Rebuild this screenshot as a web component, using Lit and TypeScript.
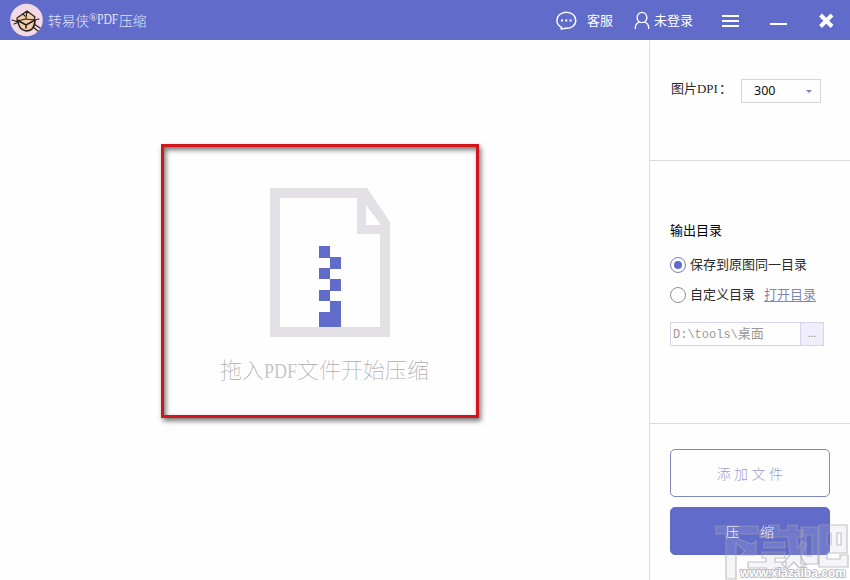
import { LitElement, html, css, svg } from "lit";
import { customElement, state } from "lit/decorators.js";

@customElement("app-root")
export class AppRoot extends LitElement {
  static styles = css`
    :host {
      display: flex;
      flex-direction: column;
      position: relative;
      width: 850px;
      height: 580px;
      overflow: hidden;
      background: #fefefe;
      font: 13px/20px "Liberation Sans", "Noto Sans CJK SC", sans-serif;
      color: #2b2b2b;
    }
    * { box-sizing: border-box; }
    svg { display: block; flex: none; }
    .bar {
      height: 40px;
      flex: none;
      display: flex;
      align-items: center;
      background: #616bca;
      color: #fff;
      padding-left: 10px;
    }
    .title {
      display: flex;
      margin-left: 5px;
      width: 508px;
      font: 300 13.7px/20px "Noto Sans CJK SC", sans-serif;
      color: #e3e5fb;
      white-space: nowrap;
    }
    .reg { width: 8px; font: 11px/14px "Liberation Serif", serif; }
    .half {
      display: inline-block;
      font-family: "Liberation Serif", serif;
      transform-origin: 0 50%;
      white-space: pre;
    }
    .half.t { width: 22px; transform: scaleX(0.85); }
    .half.b { width: 33px; transform: scaleX(0.82); color: #c6c6c6; }
    .half.d { width: 22px; font-size: 13.500px; transform: scaleX(0.96); }
    .service { margin-left: 10px; width: 47px; padding-top: 1px; }
    .user { margin-left: 4px; width: 68px; padding-top: 1px; }
    .main { display: flex; flex: 1; }
    .stage { width: 649px; padding: 104px 0 0 161px; }
    .drop {
      width: 318px;
      height: 274px;
      border: 3px solid #d0151b;
      box-shadow: 2px 3px 5px #0008, inset 2px 3px 5px #0008;
      display: flex;
      flex-direction: column;
      align-items: center;
      padding: 41px 0 0 20px;
    }
    .hint {
      margin-top: 16px;
      margin-right: 11px;
      width: 209px;
      white-space: nowrap;
      font: 100 22px/30px "Noto Sans CJK SC", sans-serif;
      color: #acacac;
    }
    .side { width: 201px; border-left: 1px solid #dcdce0; }
    .dpi {
      height: 121px;
      border-bottom: 1px solid #dcdce0;
      padding: 39px 0 0 21px;
      display: flex;
      align-items: flex-start;
    }
    .label { width: 70px; white-space: nowrap; }
    .select {
      width: 80px;
      height: 24px;
      border: 1px solid #d5d5df;
      display: flex;
      align-items: center;
      justify-content: space-between;
      padding: 0 8px 0 12px;
      font: 12.500px/22px "Noto Sans", sans-serif;
      color: #111;
    }
    .output { height: 263px; border-bottom: 1px solid #dcdce0; padding: 60px 0 0 20px; }
    .heading { color: #000; }
    .row { display: flex; align-items: center; height: 20px; margin-top: 14px; }
    .row + .row { margin-top: 10px; }
    .radio {
      width: 16px;
      height: 16px;
      border: 1px solid #8d8d9b;
      border-radius: 50%;
      margin-right: 4px;
      display: grid;
      place-items: center;
    }
    .radio.on { border-color: #777fbd; }
    .radio.on::after { content: ""; width: 8px; height: 8px; border-radius: 50%; background: #616bca; }
    .link { margin-left: 9px; color: #7d87b4; text-decoration: underline; text-underline-offset: 2px; }
    .path {
      width: 154px;
      height: 24px;
      margin-top: 17px;
      border: 1px solid #d4d4ea;
      display: flex;
      line-height: 22px;
      color: #999;
    }
    .value { flex: 1; padding-left: 2px; white-space: nowrap; }
    .mono { font: 12px/22px "Liberation Mono", monospace; }
    .more { width: 23px; background: #efeffc; border-left: 1px solid #d4d4ea; text-align: center; font-size: 10px; color: #777; }
    .actions { padding: 25px 0 0 20px; display: flex; flex-direction: column; gap: 10px; }
    .btn {
      width: 160px;
      height: 48px;
      border: 1px solid #8087b9;
      border-radius: 5px;
      display: flex;
      align-items: center;
      justify-content: center;
      font: 300 14px/20px "Noto Sans CJK SC", sans-serif;
      letter-spacing: 3.4px;
      color: #9ba0cb;
      padding: 0 0 1px 3px;
    }
    .btn.fill { background: #616bca; border-color: #616bca; color: #fff; gap: 17px; }
    .mark { position: absolute; left: 710px; top: 515px; }
    .site { font: bold 12px "Liberation Sans", sans-serif; }
  `;

  @state() private sameFolder = true;

  private logo = svg`<svg width="33" height="34" viewBox="0 0 33 34">
    <circle cx="16.5" cy="17" r="16.3" fill="#f2d9e5"/>
    <path d="M8 15L17 7l8 6 1 5c-1 7-4 10-9 10s-8-4-9-13z" fill="#f4cda6"/>
    <g fill="none" stroke="#2a211e" stroke-width="1.2" stroke-linejoin="round" stroke-linecap="round">
      <path d="M7 15L17 8l8 6-1 3-8-1-9 2zM17 8l-1 7" />
      <path d="M8 17c0 7 3 10 8 11 6 0 9-4 9-11M9 18l7 4 9-5M16 22v3" stroke-width="1.500"/>
      <path d="M2 17l6 2M4 21l5-2M24 21l6 4M23 24l5 4M25 17l4-1M13 11l2 2" />
    </g></svg>`;

  private file = svg`<svg width="120" height="149" viewBox="0 0 120 149">
    <path d="M0 0h97l23 34v115H0zM10 10v129h100V46H87V10zM96 17v20h15z" fill="#e3e1e5" fill-rule="evenodd"/>
    <path d="M49 58h11v11h11v12H60v10h11v12H60v10h11v26H49v-15h11v-11H49v-11h11V91H49V80h11V70H49z" fill="#616bca"/>
    </svg>`;

  render() {
    return html`
      <header class="bar">
        ${this.logo}
        <div class="title">转易侠<span class="reg">®</span><span class="half t">PDF</span>压缩</div>
        <svg width="21" height="20" viewBox="0 0 21 20" fill="none" stroke="#fff" stroke-width="1.4">
          <path d="M5.5 17.300C2.600 15.800.9 13.400.9 10.500.9 5.700 5 2.200 10.300 2.200S19.800 5.700 19.800 10.500s-4.200 7.800-9.500 7.800L5.200 19z"/>
          <path d="M5 10.500h2M9.300 10.500h2M13.600 10.500h2" stroke-width="2"/>
        </svg>
        <span class="service">客服</span>
        <svg width="16" height="18" viewBox="0 0 16 18" fill="none" stroke="#fff" stroke-width="1.300">
          <ellipse cx="8" cy="6.500" rx="4.900" ry="5.200"/><path d="M1.200 18c0-3.700 1.500-6.200 4.200-7.200M10.600 10.800c2.700 1 4.200 3.500 4.200 7.200"/>
        </svg>
        <span class="user">未登录</span>
        <svg width="128" height="40" viewBox="0 0 128 40" fill="none" stroke="#fff" stroke-width="2">
          <path d="M0 16h17M0 21h17M0 26h17M48 24h17"/>
          <path d="M98.500 15l11.500 11.500M110 15L98.500 26.500" stroke-width="4"/>
        </svg>
      </header>
      <main class="main">
        <section class="stage">
          <div class="drop">
            ${this.file}
            <div class="hint">拖入<span class="half b">PDF</span>文件开始压缩</div>
          </div>
        </section>
        <aside class="side">
          <div class="dpi">
            <span class="label">图片<span class="half d">DPI</span>：</span>
            <div class="select">300<svg width="6" height="3" viewBox="0 0 6 3"><path d="M0 0h6L3 3z" fill="#7d82b8"/></svg></div>
          </div>
          <div class="output">
            <div class="heading">输出目录</div>
            <div class="row" @click=${() => (this.sameFolder = true)}>
              <span class="radio ${this.sameFolder ? "on" : ""}"></span>保存到原图同一目录
            </div>
            <div class="row" @click=${() => (this.sameFolder = false)}>
              <span class="radio ${this.sameFolder ? "" : "on"}"></span>自定义目录<span class="link">打开目录</span>
            </div>
            <div class="path"><span class="value"><span class="mono">D:\\tools\\</span>桌面</span><span class="more">...</span></div>
          </div>
          <div class="actions">
            <div class="btn">添加文件</div>
            <div class="btn fill"><span>压</span><span>缩</span></div>
          </div>
        </aside>
      </main>
      <svg class="mark" width="140" height="65" viewBox="0 0 140 65">
        <g fill="#c8c8d8" fill-opacity=".16" stroke="#a0a0aa" stroke-opacity=".6" stroke-width="1.200" fill-rule="evenodd">
          <path d="M6 11h42v8H28v5l14 5 4-3v14H31l4-4-9-8v36H16V19H6z"/>
          <path d="M50 15h10v-5h9v5h9v-5h9v5h6v7h-6l1 11 4-7 5 3-6 13 5 8-7 3-5-6-7 7-5-5 8-9-2-18H50zM54 27h21v6H54zM52 37h23v6H65v4h11v6H65v5h-9v-5H38v-6h18v-4h-4z"/>
          <path d="M91 12h17v37H91zM96 20v21h6V20z"/>
          <path d="M109 10h28v28h-20v6h13v-4h8v12h-29zM117 18v12h4V18zM127 18v12h4V18z"/>
        </g>
        <text class="site" x="30" y="62" textLength="106" lengthAdjust="spacingAndGlyphs" fill="#fff" stroke="#b0b0b6" stroke-width="1.600" paint-order="stroke">www.xiazaiba.com</text>
      </svg>
    `;
  }
}
